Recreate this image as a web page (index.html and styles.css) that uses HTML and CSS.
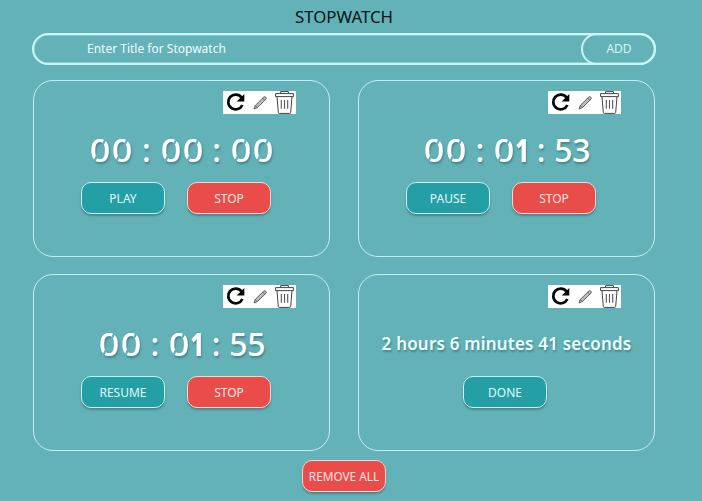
FILE: index.html
```
<!DOCTYPE html>
<html lang="en">
<head>
<meta charset="utf-8">
<title>Stopwatch</title>
<link rel="stylesheet" href="styles.css">
</head>
<body>
<svg width="0" height="0" class="defs">
  <symbol id="tools" viewBox="0 0 73 23">
    <path d="M18.4 6.3A7.4 7.4 0 1 0 19.4 14" fill="none" stroke="#050505" stroke-width="2.7"/>
    <path d="M21.3 3v7.6h-7.6z" fill="#050505"/>
    <path d="M31 18l1.2-3.4 8.6-8.6q1-.8 2 .2t.2 2l-8.6 8.4z" fill="#bbb" stroke="#555" stroke-width=".9"/>
    <path d="M32.3 14.6l2 2M39.6 7.2l2.1 2" stroke="#444" stroke-width=".7"/>
    <path d="M54 5.8l1.3 15.6q.1 1 1 1h10.4q.9 0 1-1L69 5.8M52.6 2.6h17.8v3H52.6zM57.6 2.6V.6h7.8v2" fill="none" stroke="#444" stroke-width="1"/>
    <path d="M58.3 9v8.8M61.5 9v8.8M64.7 9v8.8" stroke="#555" stroke-width="1.1"/>
  </symbol>
</svg>
<main>
  <h1>STOPWATCH</h1>
  <div class="entry"><span class="hint">Enter Title for Stopwatch</span><span class="add">ADD</span></div>
  <section class="grid">
    <article class="card">
      <svg class="tools"><use href="#tools"/></svg>
      <div class="time"><b class="z">0</b><b class="z">0</b><i>:</i><b class="z">0</b><b class="z">0</b><i>:</i><b class="z">0</b><b class="z">0</b></div>
      <div class="actions"><span class="btn">PLAY</span><span class="btn stop">STOP</span></div>
    </article>
    <article class="card">
      <svg class="tools"><use href="#tools"/></svg>
      <div class="time"><b class="z">0</b><b class="z">0</b><i>:</i><b class="z">0</b><b class="one">1</b><i>:</i><b>5</b><b>3</b></div>
      <div class="actions"><span class="btn">PAUSE</span><span class="btn stop">STOP</span></div>
    </article>
    <article class="card">
      <svg class="tools"><use href="#tools"/></svg>
      <div class="time"><b class="z">0</b><b class="z">0</b><i>:</i><b class="z">0</b><b class="one">1</b><i>:</i><b>5</b><b>5</b></div>
      <div class="actions"><span class="btn">RESUME</span><span class="btn stop">STOP</span></div>
    </article>
    <article class="card">
      <svg class="tools"><use href="#tools"/></svg>
      <div class="time total">2 hours 6 minutes 41 seconds</div>
      <div class="actions single"><span class="btn">DONE</span></div>
    </article>
  </section>
  <div class="footer"><span class="btn stop">REMOVE ALL</span></div>
</main>
</body>
</html>
```
FILE: styles.css
```
* { box-sizing: border-box; }
body {
  margin: 0;
  height: 501px;
  overflow: hidden;
  background: #63b2b8;
  font-family: "Noto Sans", sans-serif;
  color: #f0ffff;
}
.defs { display: block; }
main { width: 622px; margin-left: 33px; }
h1 {
  margin: 0;
  height: 33px;
  padding-top: 4px;
  font-size: 16.8px;
  font-weight: 400;
  line-height: 25px;
  text-align: center;
  color: #061416;
}
.entry {
  display: flex;
  justify-content: space-between;
  width: 624px;
  height: 32px;
  margin-left: -1px;
  border: 2px solid #c9f5f8;
  border-radius: 16px;
  box-shadow: inset 0 0 0 .5px #b0e2e6;
  font-size: 12px;
  line-height: 28px;
}
.hint { padding-left: 53px; }
.add {
  width: 75px;
  height: 32px;
  margin: -2px;
  padding-left: 1px;
  border: 2px solid #c9f5f8;
  border-radius: 16px;
  text-align: center;
  color: #d5f5f6;
}
.grid {
  display: grid;
  grid-template-columns: 297px 297px;
  grid-auto-rows: 177px;
  gap: 17px 28px;
  margin-top: 15px;
}
.card {
  display: flex;
  flex-direction: column;
  align-items: center;
  padding-top: 10px;
  border: 1px solid #c2f0f1;
  border-radius: 20px;
}
.tools {
  width: 73px;
  height: 23px;
  margin-right: 33px;
  align-self: flex-end;
  background: #fff;
}
.time {
  display: flex;
  height: 48px;
  margin-top: 12px;
  font-size: 32px;
  line-height: 48px;
  color: #fff;
  text-shadow: 1px 2px 2px rgba(40, 80, 85, .45);
}
.time b { width: 18px; text-align: center; font-weight: 500; }
.time i { width: 26.3px; text-align: center; font-style: normal; font-weight: 500; }
.time .z {
  width: 22px;
  transform: scaleX(1.13);
  mask: linear-gradient(114deg, #000 0 46.5%, transparent 48.5% 51.5%, #000 53.5%);
}
.time .one { width: 18px; margin: 0 -2.5px; transform: scaleX(.76); font-weight: 800; }
.time.total {
  font-size: 17px;
  font-weight: 600;
  letter-spacing: .2px;
  white-space: nowrap;
  color: #eaffff;
}
.actions { display: flex; gap: 22px; margin-top: 8px; margin-right: 11px; }
.actions.single { margin-right: 3px; }
.btn {
  width: 84px;
  height: 32px;
  border: 1px solid #c5f2f4;
  border-radius: 10px;
  background: #249fa6;
  box-shadow: 0 2px 2px rgba(55, 90, 95, .5);
  font-size: 12px;
  line-height: 31px;
  text-align: center;
  white-space: nowrap;
  color: #e0fafa;
}
.stop { background: #e94c49; border-color: #f3d9d8; color: #ffe3e0; }
.footer { display: flex; justify-content: center; margin-top: 9px; }
.footer .btn { font-size: 11.8px; line-height: 31px; }
```
